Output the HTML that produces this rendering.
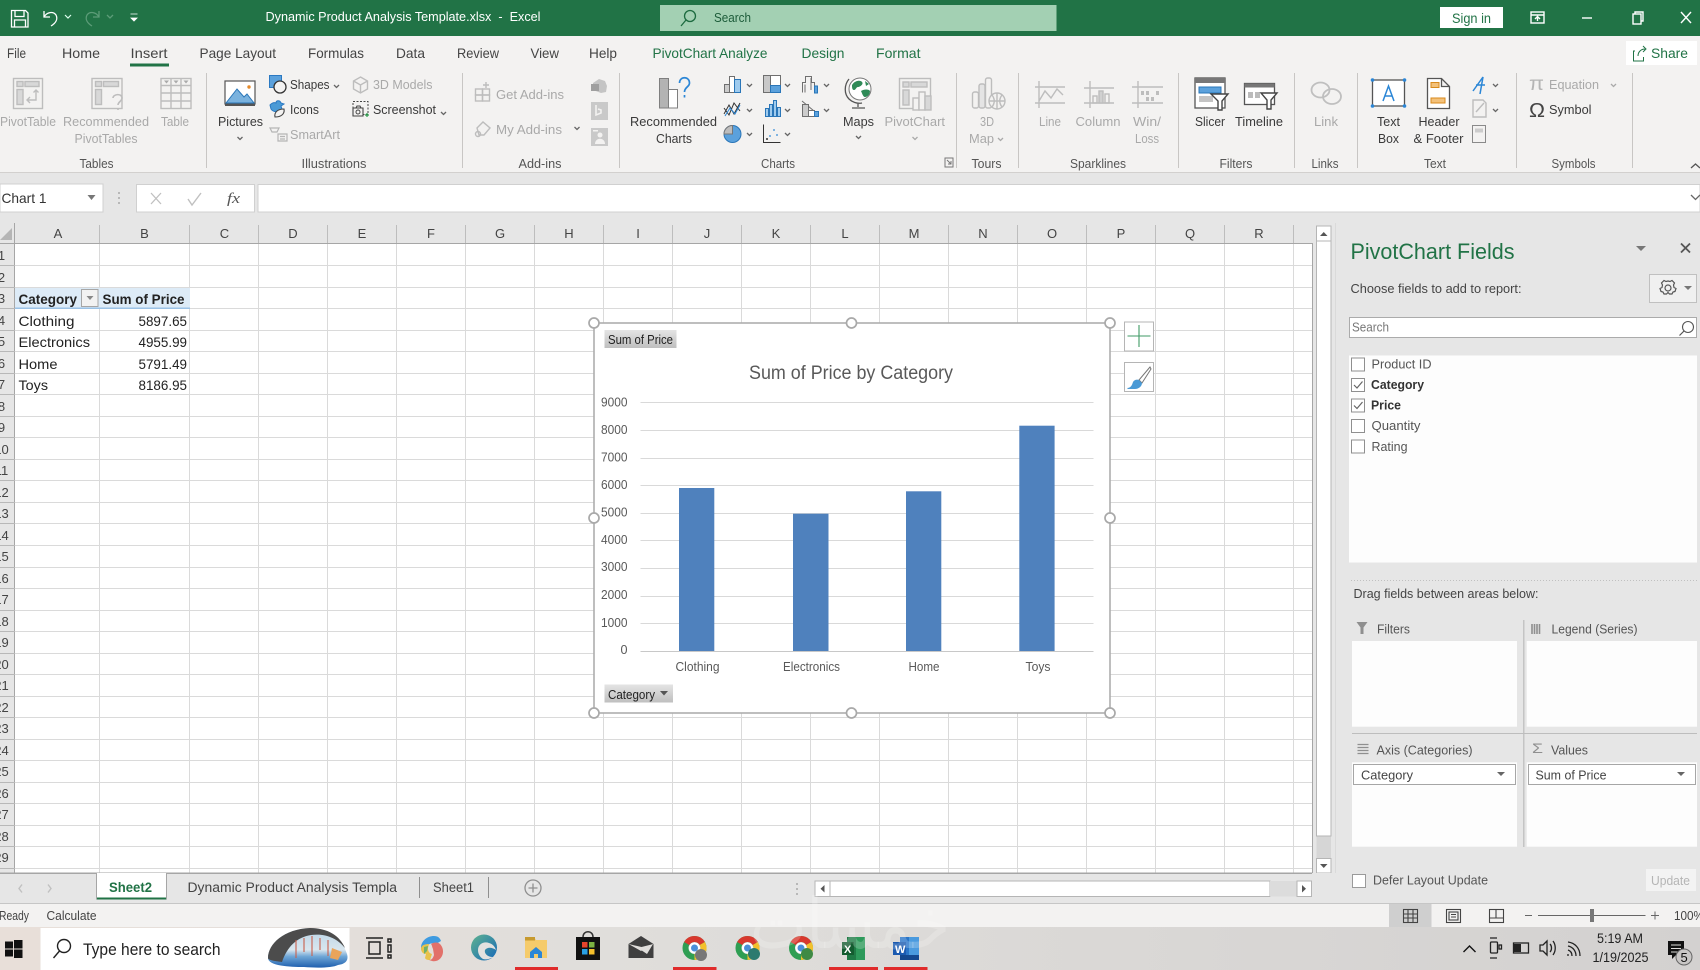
<!DOCTYPE html>
<html lang="en">
<head>
<meta charset="utf-8">
<title>Dynamic Product Analysis Template.xlsx - Excel</title>
<style>
html,body{margin:0;padding:0;width:1700px;height:970px;overflow:hidden;background:#fff}
svg{display:block;filter:blur(.35px)}
text{font-family:"Liberation Sans",sans-serif;font-size:13px;fill:#444;white-space:pre}
.g{fill:#a9a9a9}
.d{fill:#3a3a3a}
.tab{font-size:14px;fill:#444}
.gt{font-size:14px;fill:#217346}
.gl{font-size:12.5px;fill:#555}
.c{font-size:14px;fill:#222}
.b{font-weight:bold}
.h{font-size:13px;fill:#444;text-anchor:middle}
.p{font-size:13.5px;fill:#555}
.ax{font-size:12.5px;fill:#595959}
.s{fill:none;stroke:#bdbdbd;stroke-width:1.4}
.k{fill:none;stroke:#6a6a6a;stroke-width:1.4}
.car{fill:none;stroke:#666;stroke-width:1.3}
.carg{fill:none;stroke:#aaa;stroke-width:1.3}
</style>
</head>
<body>
<svg xmlns="http://www.w3.org/2000/svg" width="1700" height="970" viewBox="0 0 1700 970">
<defs>
<linearGradient id="btn" x1="0" y1="0" x2="0" y2="1"><stop offset="0" stop-color="#e4e4e4"/><stop offset="1" stop-color="#bfbfbf"/></linearGradient>
<linearGradient id="tb" x1="0" y1="0" x2="1" y2="0"><stop offset="0" stop-color="#e8dfd9"/><stop offset=".35" stop-color="#e0dedb"/><stop offset="1" stop-color="#d3d1d0"/></linearGradient>
<linearGradient id="art" x1="0" y1="0" x2="0" y2="1"><stop offset="0" stop-color="#b9d4e6"/><stop offset=".55" stop-color="#d9e6ee"/><stop offset=".72" stop-color="#6ea6d6"/><stop offset="1" stop-color="#1f5fae"/></linearGradient>
<linearGradient id="edge" x1="0" y1="0" x2="1" y2="1"><stop offset="0" stop-color="#5fb38f"/><stop offset="1" stop-color="#1668b8"/></linearGradient>
</defs>

<!-- base backgrounds -->
<rect width="1700" height="970" fill="#fff"/>
<rect x="0" y="0" width="1700" height="36" fill="#217346"/>
<rect x="0" y="36" width="1700" height="136" fill="#f3f2f1"/>
<rect x="0" y="172" width="1700" height="1" fill="#d2d0ce"/>
<rect x="0" y="173" width="1700" height="70" fill="#e6e6e6"/>

<!-- title bar -->
<g fill="none" stroke="#fff" stroke-width="1.300">
<path d="M11.500 10.500h14l2.500 2.500v14h-16.500z"/><path d="M15 10.500v6h9v-6"/><path d="M14.500 27v-7h11v7"/>
<path d="M44 11v6h6"/><path d="M44 17c3-5 9-6 12-2 2 4 0 8-5 11"/>
</g>
<path d="M65 15l3 3 3-3" fill="none" stroke="#dfe" stroke-width="1.200"/>
<g fill="none" stroke="#5c9c78" stroke-width="1.300"><path d="M99 11v6h-6"/><path d="M99 17c-3-5-9-6-12-2-2 4 0 8 5 11"/><path d="M107 15l3 3 3-3"/></g>
<path d="M130.500 14h7M131 18h6l-3 3z" fill="#fff" stroke="#fff" stroke-width=".8"/>
<text x="265.500" y="21" style="font-size:13px;fill:#fff" textLength="275" lengthAdjust="spacingAndGlyphs">Dynamic Product Analysis Template.xlsx  -  Excel</text>
<rect x="660" y="5" width="396.500" height="26" fill="#a3d0b3"/>
<circle cx="690" cy="16" r="5.500" fill="none" stroke="#1d6b40" stroke-width="1.300"/><path d="M686 20l-5 6" stroke="#1d6b40" stroke-width="1.300"/>
<text x="714" y="22" style="font-size:13px;fill:#1d5c3a" textLength="37" lengthAdjust="spacingAndGlyphs">Search</text>
<rect x="1440" y="7" width="63" height="21" fill="#fff"/>
<text x="1452" y="23" style="font-size:13.500px;fill:#217346" textLength="39" lengthAdjust="spacingAndGlyphs">Sign in</text>
<g fill="none" stroke="#fff" stroke-width="1.400">
<rect x="1531" y="12" width="13" height="11"/><path d="M1531 15h13M1537.500 21v-4M1535 19l2.500-2.500 2.500 2.500"/>
<path d="M1582 18h10"/>
<rect x="1633" y="14" width="8" height="10"/><path d="M1635 14v-2h8v9h-2"/>
<path d="M1681 12l10 11M1691 12l-10 11"/>
</g>

<!-- tabs -->
<g class="tabs">
<text class="tab" x="7" y="58" textLength="19" lengthAdjust="spacingAndGlyphs">File</text>
<text class="tab" x="62" y="58" textLength="38" lengthAdjust="spacingAndGlyphs">Home</text>
<text class="tab" x="130.500" y="58" textLength="37" lengthAdjust="spacingAndGlyphs">Insert</text>
<text class="tab" x="199.500" y="58" textLength="76.500" lengthAdjust="spacingAndGlyphs">Page Layout</text>
<text class="tab" x="308" y="58" textLength="56" lengthAdjust="spacingAndGlyphs">Formulas</text>
<text class="tab" x="396" y="58" textLength="29" lengthAdjust="spacingAndGlyphs">Data</text>
<text class="tab" x="457" y="58" textLength="42" lengthAdjust="spacingAndGlyphs">Review</text>
<text class="tab" x="530.500" y="58" textLength="28.500" lengthAdjust="spacingAndGlyphs">View</text>
<text class="tab" x="589" y="58" textLength="28" lengthAdjust="spacingAndGlyphs">Help</text>
<text class="gt" x="652.500" y="58" textLength="115" lengthAdjust="spacingAndGlyphs">PivotChart Analyze</text>
<text class="gt" x="801.500" y="58" textLength="43" lengthAdjust="spacingAndGlyphs">Design</text>
<text class="gt" x="876" y="58" textLength="44.500" lengthAdjust="spacingAndGlyphs">Format</text>
</g>
<rect x="130" y="63.500" width="39" height="3" fill="#217346"/>
<rect x="1626" y="41" width="71" height="24" fill="#fff"/>
<path d="M1635 51h-1.500v10h10v-4M1638 56c0-4 3-7 7-7M1643 46l3 3-3 3" fill="none" stroke="#217346" stroke-width="1"/>
<text x="1651" y="58" style="font-size:13.500px;fill:#217346" textLength="37" lengthAdjust="spacingAndGlyphs">Share</text>

<!-- ribbon separators -->
<path d="M206.500 73v95M462.500 73v95M619.500 73v95M956.500 73v95M1018.500 73v95M1178.500 73v95M1294.500 73v95M1357.500 73v95M1516.500 73v95M1632.500 73v95" stroke="#c8c6c4" fill="none"/>

<!-- group labels -->
<text class="gl" x="96.500" y="168" text-anchor="middle" textLength="34" lengthAdjust="spacingAndGlyphs">Tables</text>
<text class="gl" x="334" y="168" text-anchor="middle" textLength="65" lengthAdjust="spacingAndGlyphs">Illustrations</text>
<text class="gl" x="540" y="168" text-anchor="middle" textLength="43" lengthAdjust="spacingAndGlyphs">Add-ins</text>
<text class="gl" x="778" y="168" text-anchor="middle" textLength="34" lengthAdjust="spacingAndGlyphs">Charts</text>
<text class="gl" x="986.500" y="168" text-anchor="middle" textLength="30" lengthAdjust="spacingAndGlyphs">Tours</text>
<text class="gl" x="1098" y="168" text-anchor="middle" textLength="56" lengthAdjust="spacingAndGlyphs">Sparklines</text>
<text class="gl" x="1236" y="168" text-anchor="middle" textLength="33" lengthAdjust="spacingAndGlyphs">Filters</text>
<text class="gl" x="1325" y="168" text-anchor="middle" textLength="27" lengthAdjust="spacingAndGlyphs">Links</text>
<text class="gl" x="1435" y="168" text-anchor="middle" textLength="22" lengthAdjust="spacingAndGlyphs">Text</text>
<text class="gl" x="1573.500" y="168" text-anchor="middle" textLength="44" lengthAdjust="spacingAndGlyphs">Symbols</text>

<!-- ribbon labels -->
<text class="g" x="0" y="126" textLength="56" lengthAdjust="spacingAndGlyphs">PivotTable</text>
<text class="g" x="63" y="126" textLength="86" lengthAdjust="spacingAndGlyphs">Recommended</text>
<text class="g" x="74.500" y="143" textLength="63" lengthAdjust="spacingAndGlyphs">PivotTables</text>
<text class="g" x="161" y="126" textLength="28" lengthAdjust="spacingAndGlyphs">Table</text>
<text class="d" x="218" y="126" textLength="45" lengthAdjust="spacingAndGlyphs">Pictures</text>
<text class="d" x="290" y="89" textLength="39.500" lengthAdjust="spacingAndGlyphs">Shapes</text>
<text class="d" x="290" y="114" textLength="29" lengthAdjust="spacingAndGlyphs">Icons</text>
<text class="g" x="290" y="139" textLength="50" lengthAdjust="spacingAndGlyphs">SmartArt</text>
<text class="g" x="373" y="89" textLength="59.500" lengthAdjust="spacingAndGlyphs">3D Models</text>
<text class="d" x="373" y="114" textLength="63" lengthAdjust="spacingAndGlyphs">Screenshot</text>
<text class="g" x="496" y="99" textLength="68" lengthAdjust="spacingAndGlyphs">Get Add-ins</text>
<text class="g" x="496" y="134" textLength="66" lengthAdjust="spacingAndGlyphs">My Add-ins</text>
<text class="d" x="630" y="126" textLength="87" lengthAdjust="spacingAndGlyphs">Recommended</text>
<text class="d" x="656" y="143" textLength="36" lengthAdjust="spacingAndGlyphs">Charts</text>
<text class="d" x="843" y="126" textLength="31" lengthAdjust="spacingAndGlyphs">Maps</text>
<text class="g" x="884.500" y="126" textLength="60.500" lengthAdjust="spacingAndGlyphs">PivotChart</text>
<text class="g" x="980" y="126" textLength="14" lengthAdjust="spacingAndGlyphs">3D</text>
<text class="g" x="969" y="143" textLength="25" lengthAdjust="spacingAndGlyphs">Map</text>
<text class="g" x="1039" y="126" textLength="22" lengthAdjust="spacingAndGlyphs">Line</text>
<text class="g" x="1075.500" y="126" textLength="45" lengthAdjust="spacingAndGlyphs">Column</text>
<text class="g" x="1133" y="126" textLength="28" lengthAdjust="spacingAndGlyphs">Win/</text>
<text class="g" x="1135" y="143" textLength="24" lengthAdjust="spacingAndGlyphs">Loss</text>
<text class="d" x="1195" y="126" textLength="30" lengthAdjust="spacingAndGlyphs">Slicer</text>
<text class="d" x="1235" y="126" textLength="48" lengthAdjust="spacingAndGlyphs">Timeline</text>
<text class="g" x="1314" y="126" textLength="24" lengthAdjust="spacingAndGlyphs">Link</text>
<text class="d" x="1377" y="126" textLength="23" lengthAdjust="spacingAndGlyphs">Text</text>
<text class="d" x="1378" y="143" textLength="21" lengthAdjust="spacingAndGlyphs">Box</text>
<text class="d" x="1418.500" y="126" textLength="41" lengthAdjust="spacingAndGlyphs">Header</text>
<text class="d" x="1413.500" y="143" textLength="50" lengthAdjust="spacingAndGlyphs">&amp; Footer</text>
<text class="g" x="1549" y="89" textLength="50" lengthAdjust="spacingAndGlyphs">Equation</text>
<text class="d" x="1549" y="114" textLength="42.500" lengthAdjust="spacingAndGlyphs">Symbol</text>

<!-- ribbon carets -->
<path d="M334 85l2.500 2.500 2.500-2.500M441 112l2.500 2.500 2.500-2.500M237.500 137l2.500 2.500 2.500-2.500M747 84l2.500 2.500 2.500-2.500M785 84l2.500 2.500 2.500-2.500M824 84l2.500 2.500 2.500-2.500M747 109l2.500 2.500 2.500-2.500M785 109l2.500 2.500 2.500-2.500M824 109l2.500 2.500 2.500-2.500M747 133l2.500 2.500 2.500-2.500M785 133l2.500 2.500 2.500-2.500M856 136l2.500 2.500 2.500-2.500M1493 84l2.500 2.500 2.500-2.500M1493 109l2.500 2.500 2.500-2.500M574.500 127l2.500 2.500 2.500-2.500" class="car"/>
<path d="M912.500 137l2.500 2.500 2.500-2.500M998 138l2.500 2.500 2.500-2.500M1611 84l2.500 2.500 2.500-2.500" class="carg"/>
<path d="M945 158h8v9h-8zM947 160l4 4M951 161v3h-3" fill="none" stroke="#777" stroke-width="1"/>
<path d="M1691 168l4.500-4 4.500 4" fill="none" stroke="#555" stroke-width="1.300"/>

<!-- Tables icons -->
<g class="s">
<rect x="13.500" y="78.500" width="29" height="30"/><rect x="17" y="81.500" width="6" height="5" fill="#d8d8d8"/><rect x="25" y="81.500" width="14" height="5" fill="#d8d8d8"/><rect x="17" y="89.500" width="6" height="15" fill="#d8d8d8"/><path d="M36 90v10h-8M30 97l-3 3 3 3M33.500 92.500l2.500-2.500 2.500 2.500"/>
<rect x="92" y="78.500" width="30" height="30"/><rect x="95.500" y="81.500" width="6" height="5" fill="#d8d8d8"/><rect x="103.500" y="81.500" width="15" height="5" fill="#d8d8d8"/><rect x="95.500" y="89.500" width="6" height="15" fill="#d8d8d8"/><path d="M113 98c0-4 9-5 9 0 0 3-4 4-4 7M118 108.500v1.500" stroke-width="1.600"/>
<rect x="161" y="78.500" width="30" height="30"/><path d="M161 85.500h30M161 93h30M161 101h30M171 78.500v30M181 78.500v30"/>
</g>
<path d="M164 80.500h5l-2.500 3zM173.500 80.500h5l-2.500 3zM183.500 80.500h5l-2.500 3z" fill="#aaa"/>

<!-- Illustrations icons -->
<rect x="225" y="81" width="30" height="23" fill="#fff" stroke="#555" stroke-width="1.200"/>
<path d="M226 103l11-14 7 8 3-3 7 9z" fill="#7ab2de" stroke="#2a76b8" stroke-width="1"/>
<circle cx="249" cy="87" r="1.700" fill="#e58a2a"/>
<rect x="225" y="104" width="30" height="2" fill="#555"/>
<rect x="269.500" y="75.500" width="12" height="12" fill="#5ba1dc" stroke="#2b79c2"/>
<circle cx="280" cy="87" r="6" fill="#f3f2f1" stroke="#333" stroke-width="1.300"/>
<path d="M270 105c2-2 4-3 6-2 0-3 4-3 5 0l3 1-3 2 1 3c-4 4-9 3-11 0z" fill="#4a9ad6" stroke="#2b79c2"/>
<path d="M275 117c-1-5 3-8 9-8 1 5-3 8-9 8z" fill="#f3f2f1" stroke="#444" stroke-width="1.100"/>
<path d="M270 128h9l-2 4h-5zM278 134h9v7h-9zM280 136.500h5M280 139h5" fill="none" stroke="#b5b5b5" stroke-width="1.200"/>
<path d="M360.500 77l7 4v8l-7 4-7-4v-8zM353.500 81l7 4 7-4M360.500 85v8" class="s"/>
<rect x="353" y="101.500" width="15" height="13" fill="none" stroke="#444" stroke-dasharray="2 1.500"/>
<path d="M353 108h10v8h-10zM356 108l1-2h3l1 2" fill="#f3f2f1" stroke="#444" stroke-width="1.100"/><circle cx="358" cy="112" r="2" fill="none" stroke="#444"/>
<path d="M367 113v4M365 115h4" stroke="#2a9a4b" stroke-width="1.200"/>

<!-- Add-ins icons -->
<g class="s"><rect x="475.500" y="89" width="7" height="6"/><rect x="482.500" y="89" width="7" height="6"/><rect x="475.500" y="95" width="7" height="6"/><rect x="482.500" y="95" width="7" height="6"/><path d="M486 82v6M483 85h6"/>
<path d="M477 128l6-6 7 6-6 7h-5z"/><circle cx="478" cy="134" r="2.500"/></g>
<path d="M593 83l6-4 6 2 2 5-1 6-5 1-8-3z" fill="#c4c4c4"/><rect x="591" y="84" width="8" height="7" fill="#9f9f9f"/>
<rect x="591" y="102" width="17" height="18" fill="#c9c9c9"/><path d="M596 105v10l5-2v-3l-3-1" fill="none" stroke="#f3f2f1" stroke-width="1.600"/>
<rect x="591" y="128" width="17" height="18" fill="#c9c9c9"/><circle cx="600" cy="135" r="2.500" fill="#f3f2f1"/><path d="M595 144c0-7 10-7 10 0z" fill="#f3f2f1"/><rect x="593" y="130" width="5" height="1.500" fill="#f3f2f1"/>

<!-- Charts icons -->
<rect x="659.500" y="78.500" width="9" height="29.500" fill="#b3b3b3" stroke="#7f7f7f"/>
<rect x="668.500" y="89.500" width="9" height="18.500" fill="#fff" stroke="#7f7f7f"/>
<path d="M679.500 83c0-7 10-7 10 0 0 4-5 4-5 9M684.500 95v2.500" fill="none" stroke="#2b86d6" stroke-width="1.700"/>
<g stroke="#6f6f6f" fill="none">
<rect x="724.500" y="84.500" width="5" height="8" fill="#ccc"/><rect x="729.500" y="76.500" width="5" height="16" fill="#fff"/><rect x="734.500" y="79.500" width="6" height="13" fill="#9fcbee" stroke="#2a76b8"/>
<rect x="763.500" y="75.500" width="7" height="17" fill="#c8c8c8"/><rect x="770.500" y="75.500" width="10" height="10" fill="#fff"/><rect x="770.500" y="85.500" width="10" height="7" fill="#5ba1dc" stroke="#2a76b8"/>
<path d="M802.500 92.500v-10h3v-6h6v6h3v6" /><path d="M805 92.500v-8M811 78v12"/><path d="M814.500 86v7h3v-7z" fill="#5ba1dc" stroke="#2a76b8"/>
<path d="M724 108l5 7 5-12 6 8M724 114l5-9 5 9 6-11" stroke="#333"/><path d="M725 116l5-8 5 6 5-9" stroke="#2a86d6"/>
<rect x="765.500" y="108.500" width="3" height="8" fill="#9fcbee" stroke="#2a76b8"/><rect x="769.500" y="104.500" width="3" height="12" fill="#9fcbee" stroke="#2a76b8"/><rect x="773.500" y="100.500" width="3" height="16" fill="#9fcbee" stroke="#2a76b8"/><rect x="777.500" y="107.500" width="3" height="9" fill="#9fcbee" stroke="#2a76b8"/>
<path d="M802 101l12 10"/><rect x="802.500" y="104.500" width="6" height="12" fill="#ccc"/><rect x="808.500" y="110.500" width="6" height="6" fill="#fff"/><rect x="814.500" y="111.500" width="4" height="5" fill="#5ba1dc" stroke="#2a76b8"/>
<path d="M763.500 124.500v18h17" stroke="#333"/>
</g>
<circle cx="732.500" cy="134" r="8.500" fill="#5ba1dc" stroke="#2a76b8"/><path d="M732.500 134v-8.500a8.500 8.500 0 0 0-8.500 8.500z" fill="#bdbdbd" stroke="#777"/>
<g fill="#5ba1dc"><circle cx="770" cy="136" r="1"/><circle cx="774" cy="130" r="1"/><circle cx="777" cy="135" r="1"/></g><g fill="#333"><circle cx="767" cy="139" r="1"/></g>
<!-- Maps globe -->
<circle cx="860" cy="89" r="11" fill="#fff" stroke="#777" stroke-width="1"/>
<path d="M852 85c3-5 9-5 10-3 2 2-2 5-4 5s-2 3-4 3-2-3-2-5zM861 91c3-2 8-2 9 0 0 4-3 6-5 6s-3-4-4-6zM865 81l4 3-3 2z" fill="#2f8a57"/>
<path d="M849 79c-5 6-5 15 0 20 3 3 8 5 13 4M858 103v4M852 108h13" fill="none" stroke="#555" stroke-width="1.300"/>
<!-- PivotChart -->
<g class="s"><rect x="899.500" y="78.500" width="31" height="30"/><rect x="903" y="82" width="6" height="5" fill="#d8d8d8"/><rect x="911" y="82" width="16" height="5" fill="#d8d8d8"/><rect x="903" y="90" width="6" height="15" fill="#d8d8d8"/><rect x="913" y="98" width="6" height="12" fill="#f3f2f1"/><rect x="919" y="92" width="6" height="18" fill="#f3f2f1"/><rect x="925" y="96" width="6" height="14" fill="#d8d8d8"/></g>
<!-- 3D map -->
<g class="s"><rect x="972.500" y="92" width="6" height="16" rx="2"/><rect x="979" y="84" width="6" height="24" rx="2" fill="#e4e4e4"/><rect x="985.500" y="78" width="6" height="30" rx="2"/><circle cx="997" cy="101" r="8" fill="#f3f2f1"/><path d="M989 101h16M997 93v16M992 95c3 4 3 8 0 12M1002 95c-3 4-3 8 0 12"/></g>
<!-- sparklines -->
<g class="s"><path d="M1035 87h30M1035 103h30M1039 81v27M1039 101l6-10 6 7 6-9 6 6"/>
<path d="M1084 88h30M1084 103h30M1090 81v27"/><rect x="1093" y="96" width="4" height="7" /><rect x="1099" y="91" width="4" height="12" fill="#d0d0d0"/><rect x="1105" y="94" width="4" height="9"/>
<path d="M1132 87h31M1132 103h31M1138 81v27"/></g>
<g fill="#bdbdbd"><rect x="1141" y="91" width="3" height="4"/><rect x="1146" y="91" width="3" height="4"/><rect x="1146" y="97" width="3" height="4"/><rect x="1151" y="97" width="3" height="4"/><rect x="1156" y="91" width="3" height="4"/></g>
<!-- slicer -->
<rect x="1195" y="78" width="30" height="30" fill="#fff" stroke="#555" stroke-width="1.300"/><rect x="1195" y="78" width="30" height="5" fill="#777"/>
<rect x="1199" y="87" width="22" height="6" fill="#5ba1dc" stroke="#2a76b8"/><rect x="1199" y="96" width="14" height="6" fill="#c4c4c4"/>
<path d="M1211 94h17l-6 7v9h-4v-9z" fill="#fff" stroke="#444" stroke-width="1.400"/>
<rect x="1244.500" y="83.500" width="30" height="21" fill="#fff" stroke="#555" stroke-width="1.300"/><rect x="1244.500" y="83.500" width="30" height="4" fill="#777"/>
<rect x="1248" y="92" width="5" height="6" fill="#bbb"/><rect x="1255" y="92" width="5" height="6" fill="#bbb"/>
<path d="M1261 93h16l-6 7v9h-4v-9z" fill="#fff" stroke="#444" stroke-width="1.400"/>
<!-- link -->
<ellipse cx="1320.500" cy="90" rx="9" ry="7.500" fill="none" stroke="#bfbfbf" stroke-width="1.800"/>
<ellipse cx="1332" cy="96.500" rx="9" ry="7.500" fill="none" stroke="#bfbfbf" stroke-width="1.800"/>
<!-- text box -->
<rect x="1372.500" y="80" width="32" height="26" fill="#fff" stroke="#555" stroke-width="1.300"/>
<g fill="#2b86d6"><circle cx="1372.500" cy="80" r="1.800"/><circle cx="1404.500" cy="80" r="1.800"/><circle cx="1372.500" cy="106" r="1.800"/><circle cx="1404.500" cy="106" r="1.800"/></g>
<path d="M1383 101l5.500-15 5.500 15M1385 96h7" fill="none" stroke="#2b86d6" stroke-width="1.500"/>
<path d="M1427.500 78.500h14l8 8v22h-22zM1441.500 78.500v8h8" fill="#fff" stroke="#555" stroke-width="1.300"/>
<rect x="1431" y="82.500" width="8" height="5" fill="#f3c17a" stroke="#d88a1d"/><rect x="1431" y="98" width="14" height="5" fill="#f3c17a" stroke="#d88a1d"/>
<path d="M1473 91l10-14-3 17M1476 85h9" fill="none" stroke="#2b86d6" stroke-width="1.500"/>
<path d="M1473 100h10l3 3v14h-13zM1476 112l8-9" fill="none" stroke="#bdbdbd" stroke-width="1.400"/>
<rect x="1472.500" y="125.500" width="13" height="17" fill="none" stroke="#8a8a8a"/><rect x="1475" y="128.500" width="8" height="4" fill="#ccc"/>
<text x="1529" y="90" style="font-size:19px;fill:#b5b5b5" textLength="15" lengthAdjust="spacingAndGlyphs">π</text>
<text x="1529" y="117" style="font-size:20px;fill:#444" textLength="16" lengthAdjust="spacingAndGlyphs">Ω</text>

<!-- formula bar -->
<rect x="0" y="184" width="103" height="28" fill="#fff" stroke="#d0d0d0"/>
<text x="1.500" y="203" style="font-size:14px;fill:#333" textLength="45" lengthAdjust="spacingAndGlyphs">Chart 1</text>
<path d="M87.500 195h8l-4 5z" fill="#777"/>
<g fill="#aaa"><circle cx="119" cy="193" r="1"/><circle cx="119" cy="198" r="1"/><circle cx="119" cy="203" r="1"/></g>
<rect x="136.500" y="184.500" width="118" height="27.500" fill="#fff" stroke="#d0d0d0"/>
<path d="M151 193l10 11M161 193l-10 11" stroke="#c0c0c0" stroke-width="1.300" fill="none"/>
<path d="M188 199l4 6 9-12" stroke="#c0c0c0" stroke-width="1.400" fill="none"/>
<text x="227" y="203" style="font-family:'Liberation Serif',serif;font-style:italic;font-size:15px;fill:#555" textLength="13" lengthAdjust="spacingAndGlyphs">fx</text>
<rect x="258" y="184.500" width="1442" height="27.500" fill="#fff" stroke="#d0d0d0"/>
<path d="M1691 195l4.500 4.500 4.500-4.500" fill="none" stroke="#666" stroke-width="1.300"/>

<!-- column & row headers -->
<rect x="0" y="223" width="1312" height="20" fill="#e6e6e6"/>
<rect x="0" y="243" width="15" height="630" fill="#e6e6e6"/>
<path d="M12 228v12h-12z" fill="#b5b5b5"/>
<path d="M14.500 223v650M0 243.500h1312" stroke="#a6a6a6" fill="none"/>
<path d="M99.500 225v18M189.500 225v18M258.500 225v18M327.500 225v18M396.500 225v18M465.500 225v18M534.500 225v18M603.500 225v18M672.500 225v18M741.500 225v18M810.500 225v18M879.500 225v18M948.500 225v18M1017.500 225v18M1086.500 225v18M1155.500 225v18M1224.500 225v18M1293.500 225v18" stroke="#bdbdbd"/>
<g>
<text class="h" x="58" y="238">A</text><text class="h" x="144.500" y="238">B</text><text class="h" x="224.500" y="238">C</text><text class="h" x="293" y="238">D</text><text class="h" x="362" y="238">E</text><text class="h" x="431" y="238">F</text><text class="h" x="500" y="238">G</text><text class="h" x="569" y="238">H</text><text class="h" x="638" y="238">I</text><text class="h" x="707" y="238">J</text><text class="h" x="776" y="238">K</text><text class="h" x="845" y="238">L</text><text class="h" x="914" y="238">M</text><text class="h" x="983" y="238">N</text><text class="h" x="1052" y="238">O</text><text class="h" x="1121" y="238">P</text><text class="h" x="1190" y="238">Q</text><text class="h" x="1259" y="238">R</text>
</g>
<g text-anchor="middle">
<text class="h" x="1.500" y="260">1</text><text class="h" x="1.500" y="282">2</text><text class="h" x="1.500" y="303">3</text><text class="h" x="1.500" y="325">4</text><text class="h" x="1.500" y="346">5</text><text class="h" x="1.500" y="368">6</text><text class="h" x="1.500" y="389">7</text><text class="h" x="1.500" y="411">8</text><text class="h" x="1.500" y="432">9</text><text class="h" x="1.500" y="454">10</text><text class="h" x="1.500" y="475">11</text><text class="h" x="1.500" y="497">12</text><text class="h" x="1.500" y="518">13</text><text class="h" x="1.500" y="540">14</text><text class="h" x="1.500" y="561">15</text><text class="h" x="1.500" y="583">16</text><text class="h" x="1.500" y="604">17</text><text class="h" x="1.500" y="626">18</text><text class="h" x="1.500" y="647">19</text><text class="h" x="1.500" y="669">20</text><text class="h" x="1.500" y="690">21</text><text class="h" x="1.500" y="712">22</text><text class="h" x="1.500" y="733">23</text><text class="h" x="1.500" y="755">24</text><text class="h" x="1.500" y="776">25</text><text class="h" x="1.500" y="798">26</text><text class="h" x="1.500" y="819">27</text><text class="h" x="1.500" y="841">28</text><text class="h" x="1.500" y="862">29</text>
</g>
<path d="M0 265.500h15M0 287.500h15M0 308.500h15M0 330.500h15M0 351.500h15M0 373.500h15M0 394.500h15M0 416.500h15M0 437.500h15M0 459.500h15M0 480.500h15M0 502.500h15M0 523.500h15M0 545.500h15M0 567.500h15M0 588.500h15M0 610.500h15M0 631.500h15M0 653.500h15M0 674.500h15M0 696.500h15M0 717.500h15M0 739.500h15M0 760.500h15M0 782.500h15M0 803.500h15M0 825.500h15M0 846.500h15M0 868.500h15" stroke="#b8b8b8"/>

<!-- gridlines -->
<path d="M15 265.500h1297M15 287.500h1297M15 308.500h1297M15 330.500h1297M15 351.500h1297M15 373.500h1297M15 394.500h1297M15 416.500h1297M15 437.500h1297M15 459.500h1297M15 480.500h1297M15 502.500h1297M15 523.500h1297M15 545.500h1297M15 567.500h1297M15 588.500h1297M15 610.500h1297M15 631.500h1297M15 653.500h1297M15 674.500h1297M15 696.500h1297M15 717.500h1297M15 739.500h1297M15 760.500h1297M15 782.500h1297M15 803.500h1297M15 825.500h1297M15 846.500h1297M15 868.500h1297
M99.500 244v629M189.500 244v629M258.500 244v629M327.500 244v629M396.500 244v629M465.500 244v629M534.500 244v629M603.500 244v629M672.500 244v629M741.500 244v629M810.500 244v629M879.500 244v629M948.500 244v629M1017.500 244v629M1086.500 244v629M1155.500 244v629M1224.500 244v629M1293.500 244v629" stroke="#dadada" fill="none"/>

<!-- cells -->
<rect x="15" y="288" width="175" height="20" fill="#ddebf7"/>
<rect x="15" y="307.500" width="175" height="1.500" fill="#9bc2e6"/>
<text class="c b" x="18.500" y="304" textLength="58.500" lengthAdjust="spacingAndGlyphs">Category</text>
<rect x="81.500" y="289.500" width="16.500" height="17" fill="#f2f2f2" stroke="#a6a6a6"/>
<path d="M86.500 296h7l-3.500 4z" fill="#888"/>
<text class="c b" x="102.500" y="304" textLength="82" lengthAdjust="spacingAndGlyphs">Sum of Price</text>
<text class="c" x="18.500" y="326" textLength="56" lengthAdjust="spacingAndGlyphs">Clothing</text>
<text class="c" x="138.500" y="326" textLength="48.500" lengthAdjust="spacingAndGlyphs">5897.65</text>
<text class="c" x="18.500" y="347" textLength="71.500" lengthAdjust="spacingAndGlyphs">Electronics</text>
<text class="c" x="138.500" y="347" textLength="48.500" lengthAdjust="spacingAndGlyphs">4955.99</text>
<text class="c" x="18.500" y="369" textLength="39" lengthAdjust="spacingAndGlyphs">Home</text>
<text class="c" x="138.500" y="369" textLength="48.500" lengthAdjust="spacingAndGlyphs">5791.49</text>
<text class="c" x="18.500" y="390" textLength="29.500" lengthAdjust="spacingAndGlyphs">Toys</text>
<text class="c" x="138.500" y="390" textLength="48.500" lengthAdjust="spacingAndGlyphs">8186.95</text>

<!-- chart -->
<rect x="594" y="323" width="516" height="390" fill="#fff" stroke="#a9a9a9" stroke-width="1.500"/>
<rect x="604.500" y="330" width="72" height="18" fill="url(#btn)"/>
<text x="608" y="344" style="font-size:12.500px;fill:#222" textLength="65" lengthAdjust="spacingAndGlyphs">Sum of Price</text>
<text x="749" y="379" style="font-size:19px;fill:#595959" textLength="204" lengthAdjust="spacingAndGlyphs">Sum of Price by Category</text>
<path d="M640.500 402.500h453M640.500 430.500h453M640.500 458.500h453M640.500 485.500h453M640.500 513.500h453M640.500 540.500h453M640.500 568.500h453M640.500 596.500h453M640.500 623.500h453" stroke="#d9d9d9" fill="none"/>
<path d="M640.500 651.500h453" stroke="#c8c8c8" fill="none"/>
<g fill="#4f81bd">
<rect x="679" y="488" width="35.300" height="163"/>
<rect x="793" y="513.700" width="35.500" height="137.300"/>
<rect x="906" y="491.300" width="35.300" height="159.700"/>
<rect x="1019.300" y="425.700" width="35.300" height="225.300"/>
</g>
<g class="ax">
<text class="ax" x="601" y="406.500" textLength="26.500" lengthAdjust="spacingAndGlyphs">9000</text>
<text class="ax" x="601" y="434" textLength="26.500" lengthAdjust="spacingAndGlyphs">8000</text>
<text class="ax" x="601" y="461.500" textLength="26.500" lengthAdjust="spacingAndGlyphs">7000</text>
<text class="ax" x="601" y="489" textLength="26.500" lengthAdjust="spacingAndGlyphs">6000</text>
<text class="ax" x="601" y="516.500" textLength="26.500" lengthAdjust="spacingAndGlyphs">5000</text>
<text class="ax" x="601" y="544" textLength="26.500" lengthAdjust="spacingAndGlyphs">4000</text>
<text class="ax" x="601" y="571" textLength="26.500" lengthAdjust="spacingAndGlyphs">3000</text>
<text class="ax" x="601" y="599" textLength="26.500" lengthAdjust="spacingAndGlyphs">2000</text>
<text class="ax" x="601" y="627" textLength="26.500" lengthAdjust="spacingAndGlyphs">1000</text>
<text class="ax" x="620.500" y="654" textLength="7" lengthAdjust="spacingAndGlyphs">0</text>
<text class="ax" x="675.500" y="671" textLength="44" lengthAdjust="spacingAndGlyphs">Clothing</text>
<text class="ax" x="783" y="671" textLength="57" lengthAdjust="spacingAndGlyphs">Electronics</text>
<text class="ax" x="908.500" y="671" textLength="31" lengthAdjust="spacingAndGlyphs">Home</text>
<text class="ax" x="1025.500" y="671" textLength="25" lengthAdjust="spacingAndGlyphs">Toys</text>
</g>
<rect x="604.500" y="684.500" width="68.500" height="18" fill="url(#btn)"/>
<text x="608" y="699" style="font-size:13px;fill:#222" textLength="47" lengthAdjust="spacingAndGlyphs">Category</text>
<path d="M660 691h8l-4 4.500z" fill="#555"/>
<g fill="#fff" stroke="#a9a9a9" stroke-width="1.700">
<circle cx="594" cy="323" r="5"/><circle cx="851.500" cy="323" r="5"/><circle cx="1110" cy="323" r="5"/>
<circle cx="594" cy="518" r="5"/><circle cx="1110" cy="518" r="5"/>
<circle cx="594" cy="713" r="5"/><circle cx="851.500" cy="713" r="5"/><circle cx="1110" cy="713" r="5"/>
</g>
<rect x="1124.500" y="322" width="29" height="29" fill="#fff" stroke="#b5b5b5"/>
<path d="M1139 325v22M1127.500 336h23" stroke="#3f9a65" stroke-width="1.100"/>
<rect x="1124.500" y="362.500" width="29" height="29" fill="#fff" stroke="#b5b5b5"/>
<path d="M1150 367l-11 13 3 3 9-14z" fill="#fff" stroke="#777"/>
<path d="M1127 388c4 0 5-3 6-6 1-2 4-3 6-2l3 3c0 3-3 6-7 6h-7z" fill="#4a9ad6"/>

<!-- right edge of grid and vertical scrollbar -->
<rect x="1312" y="223" width="24" height="680" fill="#e6e6e6"/>
<rect x="1312" y="243" width="1" height="630" fill="#a6a6a6"/>
<rect x="1316.500" y="226" width="14.500" height="15" fill="#fff" stroke="#b5b5b5"/>
<path d="M1320 236h7.500l-3.750-4z" fill="#555"/>
<rect x="1316.500" y="836" width="14.500" height="22" fill="#d6d6d6"/>
<rect x="1316.500" y="241" width="14.500" height="595" fill="#fff" stroke="#b5b5b5"/>
<rect x="1316.500" y="858.500" width="14.500" height="14.500" fill="#fff" stroke="#b5b5b5"/>
<path d="M1320 864h7.500l-3.750 4z" fill="#555"/>
<rect x="1335.500" y="223" width="1" height="680" fill="#cfcfcf"/>

<!-- pane -->
<rect x="1336" y="223" width="364" height="680" fill="#e6e6e6"/>
<text x="1350.500" y="259" style="font-size:22px;fill:#217346" textLength="164" lengthAdjust="spacingAndGlyphs">PivotChart Fields</text>
<path d="M1636 246h10l-5 5z" fill="#777"/>
<path d="M1681 243.500l9 9M1690 243.500l-9 9" stroke="#555" stroke-width="1.800"/>
<text x="1350.500" y="293" style="font-size:13px;fill:#444" textLength="171" lengthAdjust="spacingAndGlyphs">Choose fields to add to report:</text>
<rect x="1649.500" y="274.500" width="47" height="28" fill="#f0f0f0" stroke="#c0c0c0"/>
<circle cx="1668" cy="288" r="3" fill="none" stroke="#555" stroke-width="1.200"/>
<path d="M1668 281l2 .5 2-1 2.500 2.500-1 2 .5 2.500 2 1-1 3-2 .5-1 2-2.500 0-1.500-1.500-1.500 1.500-2.500 0-1-2-2-.5-1-3 2-1 .5-2.500-1-2 2.500-2.500 2 1z" fill="none" stroke="#555" stroke-width="1.200"/>
<path d="M1684 286h8l-4 4z" fill="#777"/>
<rect x="1349.500" y="317.500" width="347" height="20" fill="#fff" stroke="#ababab"/>
<text x="1352" y="331.500" style="font-size:12.500px;fill:#777" textLength="37" lengthAdjust="spacingAndGlyphs">Search</text>
<circle cx="1688" cy="327" r="5.500" fill="none" stroke="#555" stroke-width="1.100"/><path d="M1684 331l-4.500 4.500" stroke="#555" stroke-width="1.200"/>
<rect x="1349" y="355.500" width="348" height="207" fill="#fdfdfd"/>
<g fill="#fff" stroke="#8f8f8f">
<rect x="1351.500" y="358" width="13" height="13"/><rect x="1351.500" y="378.500" width="13" height="13"/><rect x="1351.500" y="399" width="13" height="13"/><rect x="1351.500" y="419.500" width="13" height="13"/><rect x="1351.500" y="440" width="13" height="13"/>
</g>
<path d="M1354 385l3 3 5.500-6.500M1354 405.500l3 3 5.500-6.500" fill="none" stroke="#666" stroke-width="1.200"/>
<text x="1371.500" y="368.500" style="font-size:13px;fill:#555" textLength="60" lengthAdjust="spacingAndGlyphs">Product ID</text>
<text class="b" x="1371" y="389" style="font-size:13px;fill:#333" textLength="53" lengthAdjust="spacingAndGlyphs">Category</text>
<text class="b" x="1371" y="409.500" style="font-size:13px;fill:#333" textLength="30" lengthAdjust="spacingAndGlyphs">Price</text>
<text x="1371.500" y="430" style="font-size:13px;fill:#555" textLength="49" lengthAdjust="spacingAndGlyphs">Quantity</text>
<text x="1371.500" y="451" style="font-size:13px;fill:#555" textLength="36" lengthAdjust="spacingAndGlyphs">Rating</text>
<path d="M1351 580.500h346" stroke="#c0c0c0" stroke-dasharray="1 2"/>
<text x="1353.500" y="598" style="font-size:13px;fill:#444" textLength="185" lengthAdjust="spacingAndGlyphs">Drag fields between areas below:</text>
<!-- areas -->
<path d="M1356.500 622h11l-4 5.500v6.500h-3v-6.500z" fill="#8f8f8f"/>
<text x="1377" y="633.500" style="font-size:13px;fill:#555" textLength="33" lengthAdjust="spacingAndGlyphs">Filters</text>
<path d="M1532 624v10M1534.500 624v10M1537 624v10M1539.500 624v10" stroke="#8f8f8f" stroke-width="1.600"/>
<text x="1551.500" y="633.500" style="font-size:13px;fill:#555" textLength="86" lengthAdjust="spacingAndGlyphs">Legend (Series)</text>
<rect x="1352" y="641" width="165" height="85.700" fill="#fdfdfd"/>
<rect x="1526.700" y="641" width="170.300" height="85.700" fill="#fdfdfd"/>
<rect x="1523" y="620" width="1.500" height="227" fill="#c4c4c4"/>
<rect x="1352" y="733" width="345" height="1" fill="#bdbdbd"/>
<path d="M1357.500 744.500h11M1357.500 747.500h11M1357.500 750.500h11M1357.500 753.500h11" stroke="#8f8f8f" stroke-width="1.300"/>
<text x="1376.500" y="754.500" style="font-size:13px;fill:#555" textLength="96" lengthAdjust="spacingAndGlyphs">Axis (Categories)</text>
<text x="1532" y="753" style="font-size:13.500px;fill:#8f8f8f" textLength="11" lengthAdjust="spacingAndGlyphs">Σ</text>
<text x="1551" y="754.500" style="font-size:13px;fill:#555" textLength="37" lengthAdjust="spacingAndGlyphs">Values</text>
<rect x="1352" y="762.300" width="165" height="84.400" fill="#fdfdfd"/>
<rect x="1526.700" y="762.300" width="170.300" height="84.400" fill="#fdfdfd"/>
<rect x="1353.500" y="764.500" width="162" height="20" fill="#fff" stroke="#a6a6a6"/>
<text x="1361" y="779.500" style="font-size:13px;fill:#444" textLength="52" lengthAdjust="spacingAndGlyphs">Category</text>
<path d="M1497 772h8l-4 4z" fill="#666"/>
<rect x="1528.500" y="764.500" width="167" height="20" fill="#fff" stroke="#a6a6a6"/>
<text x="1535.500" y="779.500" style="font-size:13px;fill:#444" textLength="71" lengthAdjust="spacingAndGlyphs">Sum of Price</text>
<path d="M1677 772h8l-4 4z" fill="#666"/>
<rect x="1352.500" y="874.500" width="13" height="13" fill="#fff" stroke="#9a9a9a"/>
<text x="1373" y="884.500" style="font-size:13px;fill:#555" textLength="115" lengthAdjust="spacingAndGlyphs">Defer Layout Update</text>
<rect x="1646" y="869" width="50" height="22" fill="#f3f3f3"/>
<text x="1651" y="885" style="font-size:13px;fill:#b5b5b5" textLength="39" lengthAdjust="spacingAndGlyphs">Update</text>

<!-- sheet tabs bar -->
<rect x="0" y="873" width="1336" height="30" fill="#e6e6e6"/>
<rect x="0" y="872.500" width="1312" height="1.500" fill="#a6a6a6"/>
<rect x="1312" y="858" width="0.800" height="15" fill="#a6a6a6"/>
<path d="M22 884.500l-3 4 3 4M48 884.500l3 4-3 4" fill="none" stroke="#c0c0c0" stroke-width="1.400"/>
<rect x="96.500" y="873" width="70" height="26" fill="#fff"/>
<rect x="96.500" y="897.500" width="70" height="2" fill="#217346"/>
<path d="M96.500 899v-26M166.500 899v-26" stroke="#a6a6a6"/>
<text class="b" x="109" y="892" style="font-size:13.500px;fill:#217346" textLength="43" lengthAdjust="spacingAndGlyphs">Sheet2</text>
<text x="187.500" y="892" style="font-size:13.500px;fill:#444" textLength="209.500" lengthAdjust="spacingAndGlyphs">Dynamic Product Analysis Templa</text>
<path d="M419.500 877v21M488.500 877v21" stroke="#8f8f8f"/>
<text x="433" y="892" style="font-size:13.500px;fill:#444" textLength="41" lengthAdjust="spacingAndGlyphs">Sheet1</text>
<circle cx="533" cy="888" r="8" fill="none" stroke="#8f8f8f" stroke-width="1.300"/>
<path d="M533 883.500v9M528.500 888h9" stroke="#8f8f8f" stroke-width="1.300"/>
<g fill="#aaa"><circle cx="797" cy="884" r="1"/><circle cx="797" cy="889" r="1"/><circle cx="797" cy="894" r="1"/></g>
<rect x="815" y="881" width="15" height="15.500" fill="#fff" stroke="#b5b5b5"/>
<path d="M824.500 885v7.500l-4-3.750z" fill="#555"/>
<rect x="830" y="881" width="440" height="15.500" fill="#fff" stroke="#b5b5b5"/>
<rect x="1270" y="881" width="27" height="15.500" fill="#dcdcdc"/>
<rect x="1297" y="881" width="14.500" height="15.500" fill="#fff" stroke="#b5b5b5"/>
<path d="M1302 885v7.500l4-3.750z" fill="#555"/>
<rect x="0" y="903" width="1700" height="1" fill="#c6c6c6"/>

<!-- status bar -->
<rect x="0" y="904" width="1700" height="23" fill="#f3f2f1"/>
<text x="-1" y="920" style="font-size:12.500px;fill:#444" textLength="30" lengthAdjust="spacingAndGlyphs">Ready</text>
<text x="46.500" y="920" style="font-size:12.500px;fill:#444" textLength="50" lengthAdjust="spacingAndGlyphs">Calculate</text>
<rect x="1389" y="904" width="42.500" height="23" fill="#cfcfcf"/>
<g fill="none" stroke="#444" stroke-width="1.100">
<rect x="1403.500" y="909.500" width="14" height="13"/><path d="M1403.500 914h14M1403.500 918h14M1408 909.500v13M1413 909.500v13"/>
<rect x="1446.500" y="909.500" width="14" height="13"/><rect x="1449" y="912" width="9" height="8"/><path d="M1451 914.500h5M1451 917h5"/>
<rect x="1489.500" y="909.500" width="14" height="13"/><path d="M1489.500 918h14M1496 909.500v8.500"/>
</g>
<path d="M1525 915.500h7M1538 915.500h107.500M1651 915.500h8M1655 911.500v8" stroke="#666" fill="none"/>
<rect x="1590" y="909" width="4" height="13" fill="#777"/>
<text x="1674" y="920" style="font-size:12.500px;fill:#444" textLength="30" lengthAdjust="spacingAndGlyphs">100%</text>

<!-- taskbar -->
<rect x="0" y="927" width="1700" height="43" fill="url(#tb)"/>
<g fill="#111"><rect x="5" y="941.500" width="8" height="7"/><rect x="14" y="940" width="8.500" height="8.500"/><rect x="5" y="949.500" width="8" height="7"/><rect x="14" y="949.500" width="8.500" height="8.500"/></g>
<rect x="40.500" y="928" width="309" height="42" fill="#fff"/>
<circle cx="64" cy="946" r="6.500" fill="none" stroke="#222" stroke-width="1.400"/><path d="M59.500 951l-6 7" stroke="#222" stroke-width="1.400"/>
<text x="83" y="955" style="font-size:17px;fill:#222" textLength="137.500" lengthAdjust="spacingAndGlyphs">Type here to search</text>
<!-- search art -->
<path d="M268 958c0-14 16-29 42-30 18 0 32 10 37 26 2 7-2 10-9 11-6 3-22 3-34 2-14 0-36-1-36-9z" fill="url(#art)"/>
<path d="M268 958c0-14 16-29 42-30 18 0 30 8 35 20-8-10-20-15-34-13-14 2-24 12-29 27-8-1-14-2-14-4z" fill="#4c4c4c"/>
<path d="M296 940v18M304 938v14M312 936v20M320 938v12M328 940v16" stroke="#c9614f" stroke-width="1.400" fill="none" opacity=".8"/>
<path d="M332 948l10 4-4 8-8-2z" fill="#eaa45a"/>
<path d="M366 938h17M366 958h17M369 942h11v12h-11zM388 939h3v3h-3zM388 945h3v7h-3zM388 955h3v3h-3z" fill="none" stroke="#222" stroke-width="1.500"/>
<!-- copilot -->
<path d="M421 948c0-7 6-12 13-12 4 0 6 2 7 5l-5 3c-5-2-8 0-9 4l-1 5c-3 0-5-2-5-5z" fill="#3f9be0"/>
<path d="M421 948c0 4 2 6 5 6l-1 4c1 2 3 2 5 2l2-6c-3-1-4-3-4-6l1-4c-4 0-7 1-8 4z" fill="#e8c24a"/>
<path d="M424 947l4-1-1 5-3 3z" fill="#6fb06a"/>
<path d="M431 944c3-2 7-2 9 0 3 3 4 8 2 12-2 4-6 6-10 5l-3-1c3 0 4-2 5-5l-1-6c-1-2-1-4-2-5z" fill="#e2716a"/>
<!-- edge -->
<circle cx="484" cy="947.500" r="13" fill="url(#edge)"/>
<path d="M478 950c0-6 6-9 11-7 4 1 6 4 7 7-4-3-9-3-11 0-1 3 2 7 8 7-3 2-7 3-10 2-3-2-5-5-5-9z" fill="#e2e1df"/>
<!-- folder -->
<path d="M525 937h9l2 3h11v18h-22z" fill="#f5cb6b"/><rect x="525" y="937" width="10" height="3.500" fill="#c79a2f"/>
<path d="M530 958v-6l6-5 6 5v6h-4v-4h-4v4z" fill="#2b86d6"/>
<!-- store -->
<rect x="576" y="937" width="24" height="23" fill="#111"/>
<path d="M583 937c0-7 10-7 10 0" fill="none" stroke="#333" stroke-width="1.500"/>
<rect x="582" y="942" width="5.500" height="5.500" fill="#e8442c"/><rect x="589" y="942" width="5.500" height="5.500" fill="#7cb342"/><rect x="582" y="949" width="5.500" height="5.500" fill="#29a0e2"/><rect x="589" y="949" width="5.500" height="5.500" fill="#f5c02c"/>
<!-- mail -->
<path d="M628.500 944l12.500-8 12.500 8v14h-25z" fill="#3f3f3f"/>
<path d="M628.500 944l12.500 7 12.500-7-12 3z" fill="#e0dedb"/>
<path d="M641 950l12-6-6 10z" fill="#e0dedb"/>
<!-- chrome x3 -->
<g fill="none" stroke-width="6">
<g transform="translate(694.500 948)"><circle r="9" stroke="#2f9e53"/><path d="M-7.800-4.500A9 9 0 0 1 7.800-4.500" stroke="#d8382e"/><path d="M7.800-4.500A9 9 0 0 1 0 9" stroke="#f3c02c"/><circle r="4.500" fill="#4a8fd8" stroke="#fff" stroke-width="2"/></g>
<g transform="translate(747.500 948)"><circle r="9" stroke="#2f9e53"/><path d="M-7.800-4.500A9 9 0 0 1 7.800-4.500" stroke="#d8382e"/><path d="M7.800-4.500A9 9 0 0 1 0 9" stroke="#f3c02c"/><circle r="4.500" fill="#4a8fd8" stroke="#fff" stroke-width="2"/></g>
<g transform="translate(801 948)"><circle r="9" stroke="#2f9e53"/><path d="M-7.800-4.500A9 9 0 0 1 7.800-4.500" stroke="#d8382e"/><path d="M7.800-4.500A9 9 0 0 1 0 9" stroke="#f3c02c"/><circle r="4.500" fill="#4a8fd8" stroke="#fff" stroke-width="2"/></g>
</g>
<circle cx="701" cy="955" r="6" fill="#777"/><circle cx="754" cy="954" r="6" fill="#2c7a6f"/><circle cx="807" cy="954" r="6" fill="#3f8a44"/>
<!-- excel -->
<rect x="847" y="937" width="18" height="23" fill="#1f7a45"/><rect x="856" y="937" width="9" height="23" fill="#2e9a5b"/>
<rect x="842" y="942" width="12" height="13" fill="#145c30"/>
<text x="844" y="953" style="font-size:11px;fill:#fff;font-weight:bold">X</text>
<!-- word -->
<rect x="900" y="937" width="19" height="23" fill="#2a75c8"/><rect x="900" y="955" width="19" height="5" fill="#14488f"/><rect x="909" y="937" width="10" height="18" fill="#4a9ade"/>
<rect x="893" y="942" width="13" height="13" fill="#1b5ab0"/>
<text x="895" y="953" style="font-size:11px;fill:#fff;font-weight:bold">W</text>
<!-- running-app indicators -->
<g fill="#e02b2b"><rect x="515" y="967" width="43" height="3"/><rect x="673" y="967" width="43.500" height="3"/><rect x="829" y="967" width="49" height="3"/><rect x="884" y="967" width="43.500" height="3"/></g>
<!-- watermark -->
<text x="850" y="948" text-anchor="middle" textLength="200" lengthAdjust="spacingAndGlyphs" style="font-family:'DejaVu Sans',sans-serif;font-size:70px;fill:#fff;fill-opacity:.2" direction="rtl">خمسات</text>
<!-- tray -->
<path d="M1463.500 952l6-6 6 6" fill="none" stroke="#111" stroke-width="1.400"/>
<g fill="none" stroke="#222" stroke-width="1.300">
<path d="M1490 938h7M1490 958h7"/><rect x="1490.500" y="942" width="7" height="11" rx="1"/><rect x="1499" y="945" width="2.500" height="4"/>
<rect x="1513.500" y="943" width="15" height="10"/>
<path d="M1540 945v6h3l4 4v-14l-4 4zM1550 944c2 2 2 6 0 8M1553 941c3 4 3 10 0 14"/>
<path d="M1568 956v-2M1572 956c0-3-1-5-4-6M1576 956c0-5-3-9-8-10M1580 956c0-8-5-13-12-14"/>
</g>
<rect x="1514" y="944" width="7" height="8" fill="#222"/>
<text x="1597" y="943" style="font-size:14px;fill:#222" textLength="46" lengthAdjust="spacingAndGlyphs">5:19 AM</text>
<text x="1592.500" y="962" style="font-size:14px;fill:#222" textLength="56" lengthAdjust="spacingAndGlyphs">1/19/2025</text>
<path d="M1668 941h16v14h-8l-4 4v-4h-4z" fill="#111"/>
<path d="M1671 945h10M1671 948.500h10M1671 952h7" stroke="#e0dedb" stroke-width="1"/>
<circle cx="1684" cy="957" r="8" fill="#c9c7c6" stroke="#666" stroke-width="1"/>
<text x="1680.500" y="962" style="font-size:13px;fill:#111">5</text>
</svg>
</body>
</html>
